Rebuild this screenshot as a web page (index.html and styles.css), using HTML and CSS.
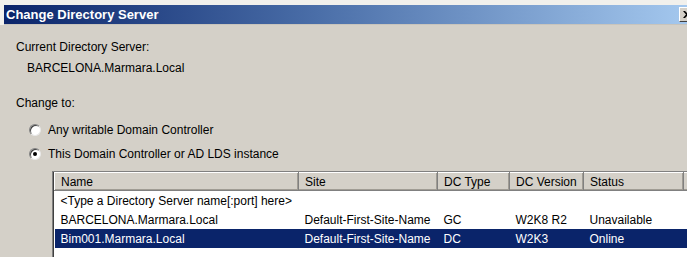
FILE: index.html
```html
<!DOCTYPE html>
<html lang="en">

<head>
    <meta charset="UTF-8">
    <title>Change Directory Server</title>
    <link rel="stylesheet" href="styles.css">
</head>

<body>
    <div class="window">
        <div class="frame-top">
            <div class="titlebar">
                <span class="title">Change Directory Server</span>
                <span class="close">
                    <svg width="8" height="7" viewBox="0 0 8 7">
                        <path d="M0 0 L2 0 L4 2 L6 0 L8 0 L5 3.5 L8 7 L6 7 L4 5 L2 7 L0 7 L3 3.5 Z" fill="#000" />
                    </svg>
                </span>
            </div>
        </div>
        <div class="content">
            <p class="label">Current Directory Server:</p>
            <p class="value">BARCELONA.Marmara.Local</p>
            <p class="label change">Change to:</p>
            <div class="option"><span class="radio"></span>Any writable Domain Controller</div>
            <div class="option"><span class="radio checked"></span>This Domain Controller or AD LDS instance</div>
            <div class="list">
                <table>
                    <colgroup>
                        <col class="c-name">
                        <col class="c-site">
                        <col class="c-type">
                        <col class="c-version">
                        <col class="c-status">
                        <col>
                    </colgroup>
                    <thead>
                        <tr>
                            <th>Name</th>
                            <th>Site</th>
                            <th>DC Type</th>
                            <th>DC Version</th>
                            <th>Status</th>
                            <th class="filler"></th>
                        </tr>
                    </thead>
                    <tbody>
                        <tr>
                            <td colspan="2">&lt;Type a Directory Server name[:port] here&gt;</td>
                            <td></td>
                            <td></td>
                            <td></td>
                            <td></td>
                        </tr>
                        <tr>
                            <td>BARCELONA.Marmara.Local</td>
                            <td>Default-First-Site-Name</td>
                            <td>GC</td>
                            <td>W2K8 R2</td>
                            <td>Unavailable</td>
                            <td></td>
                        </tr>
                        <tr class="selected">
                            <td>Bim001.Marmara.Local</td>
                            <td>Default-First-Site-Name</td>
                            <td>DC</td>
                            <td>W2K3</td>
                            <td>Online</td>
                            <td></td>
                        </tr>
                    </tbody>
                </table>
            </div>
        </div>
    </div>
</body>

</html>
```

FILE: styles.css
```css
body {
    margin: 0;
    padding: 0;
    overflow: hidden;
    background-color: #d4d0c8;
    font-family: "Liberation Sans", Arial, sans-serif;
    font-size: 12px;
    color: #000;
}

.window {
    width: 697px;
    height: 257px;
    background-color: #d4d0c8;
}

.frame-top {
    padding: 5px 0 0 4px;
    background-color: #f1f0ec;
}

.titlebar {
    height: 19px;
    display: flex;
    align-items: center;
    justify-content: space-between;
    padding-left: 2px;
    background: linear-gradient(to right, #0a246a, #4a6ea8 45%, #a6caf0);
    border-bottom: 1px solid #c8c4bc;
}

.title {
    color: #fff;
    font-weight: bold;
    font-size: 13px;
}

.close {
    width: 14px;
    height: 13px;
    margin-right: 2px;
    display: flex;
    align-items: center;
    justify-content: center;
    background-color: #d4d0c8;
    border: 1px solid;
    border-color: #fff #404040 #404040 #fff;
}

.content {
    padding: 15px 0 0 16px;
}

p {
    margin: 0;
    line-height: 15px;
}

.value {
    margin-top: 6px;
    padding-left: 11px;
}

.change {
    margin-top: 20px;
}

.option {
    height: 24px;
    display: flex;
    align-items: center;
    padding-left: 13px;
}

.option:first-of-type {
    margin-top: 7px;
}

.radio {
    width: 10px;
    height: 10px;
    margin-right: 7px;
    border-radius: 50%;
    background-color: #fff;
    border: 1px solid;
    border-color: #808080 #e8e8e8 #e8e8e8 #808080;
    box-shadow: inset 1px 1px 0 #404040;
    display: flex;
    align-items: center;
    justify-content: center;
}

.radio.checked::after {
    content: "";
    width: 4px;
    height: 4px;
    border-radius: 50%;
    background-color: #000;
}

.list {
    margin: 5px 0 0 36px;
    height: 90px;
    background-color: #fff;
    border: 1px solid;
    border-color: #808080 #fff #fff #808080;
    box-shadow: inset 1px 1px 0 #404040;
    padding: 0 0 0 1px;
    overflow: hidden;
}

table {
    border-collapse: collapse;
    table-layout: fixed;
    width: 700px;
}

.c-name {
    width: 244px;
}

.c-site {
    width: 139px;
}

.c-type {
    width: 72px;
}

.c-version {
    width: 74px;
}

.c-status {
    width: 100px;
}

th {
    height: 17px;
    padding: 0 6px;
    text-align: left;
    font-weight: normal;
    background-color: #d4d0c8;
    border-top: 1px solid #fff;
    border-left: 1px solid #fff;
    border-right: 1px solid #808080;
    border-bottom: 1px solid #808080;
    box-shadow: inset -1px -1px 0 #a09c94;
    white-space: nowrap;
}

td {
    height: 19px;
    padding: 0 6px;
    white-space: nowrap;
    overflow: hidden;
}

.selected td {
    background-color: #0a246a;
    color: #fff;
}
```
